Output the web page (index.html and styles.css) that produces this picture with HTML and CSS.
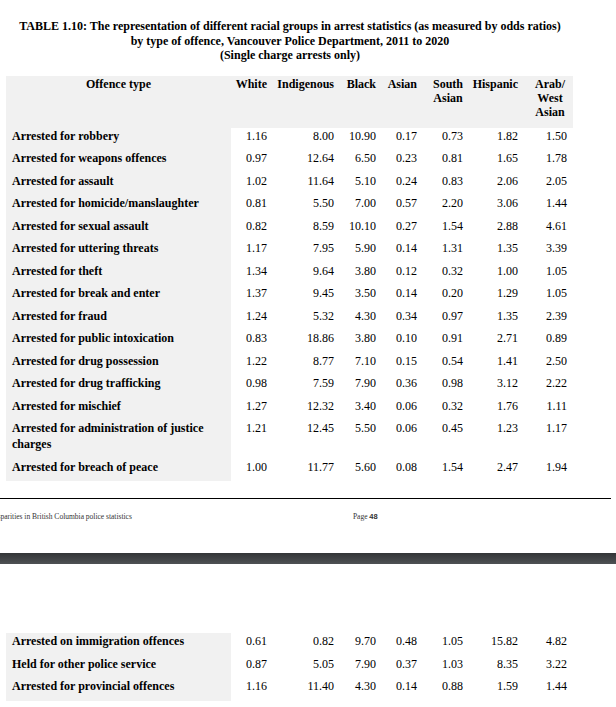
FILE: index.html
```html
<!DOCTYPE html>
<html>
<head>
<meta charset="utf-8">
<link rel="stylesheet" href="styles.css">
</head>
<body>
<div class="page page1">
  <h1 class="title">TABLE 1.10: The representation of different racial groups in arrest statistics (as measured by odds ratios)<br>by type of offence, Vancouver Police Department, 2011 to 2020<br>(Single charge arrests only)</h1>
  <div class="table">
    <div class="row head">
      <div class="label">Offence type</div>
      <div class="num"><span>White</span></div>
      <div class="num"><span>Indigenous</span></div>
      <div class="num"><span>Black</span></div>
      <div class="num"><span>Asian</span></div>
      <div class="num"><span>South<br>Asian</span></div>
      <div class="num"><span>Hispanic</span></div>
      <div class="num arab"><span>Arab/<br>West<br>Asian</span></div>
    </div>
    <div class="row"><div class="label">Arrested for robbery</div><div class="num">1.16</div><div class="num">8.00</div><div class="num">10.90</div><div class="num">0.17</div><div class="num">0.73</div><div class="num">1.82</div><div class="num">1.50</div></div>
    <div class="row"><div class="label">Arrested for weapons offences</div><div class="num">0.97</div><div class="num">12.64</div><div class="num">6.50</div><div class="num">0.23</div><div class="num">0.81</div><div class="num">1.65</div><div class="num">1.78</div></div>
    <div class="row"><div class="label">Arrested for assault</div><div class="num">1.02</div><div class="num">11.64</div><div class="num">5.10</div><div class="num">0.24</div><div class="num">0.83</div><div class="num">2.06</div><div class="num">2.05</div></div>
    <div class="row"><div class="label">Arrested for homicide/manslaughter</div><div class="num">0.81</div><div class="num">5.50</div><div class="num">7.00</div><div class="num">0.57</div><div class="num">2.20</div><div class="num">3.06</div><div class="num">1.44</div></div>
    <div class="row"><div class="label">Arrested for sexual assault</div><div class="num">0.82</div><div class="num">8.59</div><div class="num">10.10</div><div class="num">0.27</div><div class="num">1.54</div><div class="num">2.88</div><div class="num">4.61</div></div>
    <div class="row"><div class="label">Arrested for uttering threats</div><div class="num">1.17</div><div class="num">7.95</div><div class="num">5.90</div><div class="num">0.14</div><div class="num">1.31</div><div class="num">1.35</div><div class="num">3.39</div></div>
    <div class="row"><div class="label">Arrested for theft</div><div class="num">1.34</div><div class="num">9.64</div><div class="num">3.80</div><div class="num">0.12</div><div class="num">0.32</div><div class="num">1.00</div><div class="num">1.05</div></div>
    <div class="row"><div class="label">Arrested for break and enter</div><div class="num">1.37</div><div class="num">9.45</div><div class="num">3.50</div><div class="num">0.14</div><div class="num">0.20</div><div class="num">1.29</div><div class="num">1.05</div></div>
    <div class="row"><div class="label">Arrested for fraud</div><div class="num">1.24</div><div class="num">5.32</div><div class="num">4.30</div><div class="num">0.34</div><div class="num">0.97</div><div class="num">1.35</div><div class="num">2.39</div></div>
    <div class="row"><div class="label">Arrested for public intoxication</div><div class="num">0.83</div><div class="num">18.86</div><div class="num">3.80</div><div class="num">0.10</div><div class="num">0.91</div><div class="num">2.71</div><div class="num">0.89</div></div>
    <div class="row"><div class="label">Arrested for drug possession</div><div class="num">1.22</div><div class="num">8.77</div><div class="num">7.10</div><div class="num">0.15</div><div class="num">0.54</div><div class="num">1.41</div><div class="num">2.50</div></div>
    <div class="row"><div class="label">Arrested for drug trafficking</div><div class="num">0.98</div><div class="num">7.59</div><div class="num">7.90</div><div class="num">0.36</div><div class="num">0.98</div><div class="num">3.12</div><div class="num">2.22</div></div>
    <div class="row"><div class="label">Arrested for mischief</div><div class="num">1.27</div><div class="num">12.32</div><div class="num">3.40</div><div class="num">0.06</div><div class="num">0.32</div><div class="num">1.76</div><div class="num">1.11</div></div>
    <div class="row"><div class="label">Arrested for administration of justice charges</div><div class="num">1.21</div><div class="num">12.45</div><div class="num">5.50</div><div class="num">0.06</div><div class="num">0.45</div><div class="num">1.23</div><div class="num">1.17</div></div>
    <div class="row"><div class="label">Arrested for breach of peace</div><div class="num">1.00</div><div class="num">11.77</div><div class="num">5.60</div><div class="num">0.08</div><div class="num">1.54</div><div class="num">2.47</div><div class="num">1.94</div></div>
  </div>
  <div class="footer">
    <div class="rule"></div>
    <div class="footer-text"><span class="doc">Disparities in British Columbia police statistics</span><span class="pageno">Page <b>48</b></span></div>
  </div>
</div>
<div class="gap"></div>
<div class="page page2">
  <div class="table">
    <div class="row"><div class="label">Arrested on immigration offences</div><div class="num">0.61</div><div class="num">0.82</div><div class="num">9.70</div><div class="num">0.48</div><div class="num">1.05</div><div class="num">15.82</div><div class="num">4.82</div></div>
    <div class="row"><div class="label">Held for other police service</div><div class="num">0.87</div><div class="num">5.05</div><div class="num">7.90</div><div class="num">0.37</div><div class="num">1.03</div><div class="num">8.35</div><div class="num">3.22</div></div>
    <div class="row"><div class="label">Arrested for provincial offences</div><div class="num">1.16</div><div class="num">11.40</div><div class="num">4.30</div><div class="num">0.14</div><div class="num">0.88</div><div class="num">1.59</div><div class="num">1.44</div></div>
  </div>
</div>
</body>
</html>
```

FILE: styles.css
```css
html, body {
  margin: 0;
  padding: 0;
  background: #ffffff;
}
body {
  font-family: "Liberation Serif", "Times New Roman", serif;
  color: #000;
  overflow: hidden;
  height: 707px;
}
.page {
  background: #fff;
  box-sizing: border-box;
}
.page1 {
  height: 553px;
  padding-top: 19px;
}
.title {
  margin: 0;
  font-size: 12px;
  line-height: 14.5px;
  font-weight: bold;
  text-align: center;
  width: 580px;
}
.table {
  margin-left: 6px;
}
.page1 .table {
  margin-top: 13px;
}
.row {
  display: grid;
  grid-template-columns: 225px 36px 67px 42px 41px 46px 55px 49px;
  font-size: 12px;
  line-height: 16px;
}
.row .label {
  background: #f1f1f1;
  font-weight: bold;
  padding: 0 12px 6.5px 6px;
}
.row .num {
  text-align: right;
  padding-bottom: 6.5px;
}
.row.head {
  width: 567px;
  background: #f1f1f1;
  line-height: 14px;
  font-weight: bold;
  padding-top: 1px;
  padding-bottom: 9px;
}
.row.head .label {
  text-align: center;
  padding: 0;
}
.row.head .num {
  padding-bottom: 0;
}
.row.head .num span {
  display: inline-block;
  text-align: center;
}
.row.head .arab {
  padding-right: 2px;
}
.footer {
  margin-top: 17px;
}
.rule {
  width: 611px;
  height: 1px;
  background: #000;
}
.footer-text {
  display: flex;
  margin-top: 13px;
  font-size: 7.5px;
  line-height: 9px;
  color: #333;
  white-space: nowrap;
}
.doc {
  margin-left: -10px;
}
.pageno {
  margin-left: 221px;
}
.pageno b {
  font-family: "Liberation Sans", Arial, sans-serif;
  font-weight: bold;
}
.gap {
  height: 11px;
  background: linear-gradient(#333537, #4e5154);
}
.page2 {
  padding-top: 69px;
  height: 143px;
}
```
